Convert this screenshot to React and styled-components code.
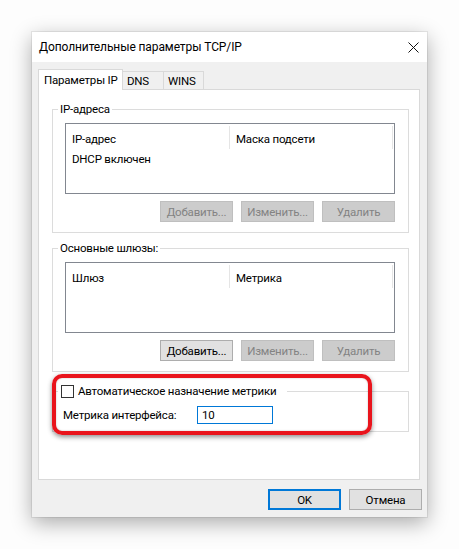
import React from 'react';
import styled, { createGlobalStyle } from 'styled-components';

const Global = createGlobalStyle`
  html, body { margin: 0; padding: 0; background: #fdfdfd; }
  body {
    font-family: Roboto, "Liberation Sans", Arial, sans-serif;
    font-size: 11.5px;
    letter-spacing: -0.2px;
    color: #000;
  }
  * { box-sizing: border-box; }
`;

const Page = styled.div`
  width: 459px;
  height: 549px;
  padding: 32px 0 0 32px;
`;

const Window = styled.div`
  width: 395px;
  height: 485px;
  background: #f0f0f0;
  display: flex;
  flex-direction: column;
  box-shadow: 0 0 0 1px rgba(0, 0, 0, 0.07), 0 6px 20px rgba(0, 0, 0, 0.33);
`;

const TitleBar = styled.div`
  height: 30px;
  flex-shrink: 0;
  background: #fff;
  display: flex;
  align-items: center;
  justify-content: space-between;
  padding: 0 8px 0 7px;
`;

const Title = styled.span`
  font-size: 12px;
  letter-spacing: -0.1px;
  line-height: 14px;
`;

const CloseBox = styled.div`
  width: 11px;
  height: 11px;
  display: flex;
`;

const Body = styled.div`
  flex: 1;
  display: flex;
  flex-direction: column;
  padding: 7px 5px 7px 6px;
`;

const TabStrip = styled.div`
  display: flex;
  align-items: flex-end;
  height: 20px;
  position: relative;
  z-index: 1;
`;

const Tab = styled.div`
  width: ${(p) => p.$w}px;
  height: ${(p) => (p.$active ? 21 : 18)}px;
  margin-bottom: ${(p) => (p.$active ? -1 : 0)}px;
  padding: ${(p) => (p.$active ? '0 0 1px 5px' : '0 0 0 4px')};
  display: flex;
  align-items: center;
  background: ${(p) => (p.$active ? '#fff' : '#f0f0f0')};
  border: 1px solid #d9d9d9;
  border-bottom: none;
  border-left: ${(p) => (p.$active ? '1px solid #d9d9d9' : 'none')};
  line-height: 14px;
  white-space: nowrap;
  overflow: hidden;
`;

const Panel = styled.div`
  width: 382px;
  height: 391px;
  background: #fff;
  border: 1px solid #d9d9d9;
  position: relative;
  padding: 0 0 0 13px;
`;

const Group = styled.div`
  width: 357px;
  margin-top: ${(p) => p.$mt}px;
`;

const GroupHead = styled.div`
  display: flex;
  align-items: center;
  height: 14px;
`;

const HeadEdge = styled.div`
  align-self: flex-end;
  height: 7px;
  border-top: 1px solid #dcdcdc;
  border-left: ${(p) => (p.$left ? '1px solid #dcdcdc' : 'none')};
  border-right: ${(p) => (p.$left ? 'none' : '1px solid #dcdcdc')};
  width: ${(p) => (p.$left ? '6px' : 'auto')};
  flex: ${(p) => (p.$left ? 'none' : 1)};
`;

const HeadLabel = styled.div`
  display: flex;
  align-items: center;
  padding: 0 ${(p) => p.$pr}px 0 2px;
  line-height: 14px;
  white-space: nowrap;
`;

const GroupBody = styled.div`
  border: 1px solid #dcdcdc;
  border-top: none;
  padding: ${(p) => p.$pad};
`;

const ListView = styled.div`
  width: 330px;
  height: 71px;
  border: 1px solid #828790;
  background: #fff;
`;

const HeaderRow = styled.div`
  display: flex;
  height: 25px;
`;

const HeaderCell = styled.div`
  width: ${(p) => p.$w}px;
  border-right: 1px solid #e5e5e5;
  padding: 2px 0 0 6px;
  display: flex;
  align-items: center;
  margin-top: 2px;
  line-height: 14px;
`;

const Row = styled.div`
  height: 18px;
  display: flex;
  align-items: center;
  padding: 1px 0 0 6px;
  line-height: 14px;
`;

const ButtonRow = styled.div`
  display: flex;
  justify-content: flex-end;
  gap: 8px;
  margin-top: 7px;
`;

const Button = styled.div`
  width: 73px;
  height: 21px;
  display: flex;
  align-items: center;
  justify-content: center;
  line-height: 14px;
  white-space: nowrap;
  background: ${(p) => (p.$disabled ? '#cccccc' : '#e1e1e1')};
  color: ${(p) => (p.$disabled ? '#838383' : '#000')};
  border: ${(p) =>
    p.$default ? '2px solid #0078d7' : p.$disabled ? '1px solid #bfbfbf' : '1px solid #adadad'};
`;

const CheckBox = styled.div`
  width: 13px;
  height: 13px;
  border: 1px solid #333;
  background: #fff;
  margin: 0 4px 0 1px;
`;

const FieldRow = styled.div`
  display: flex;
  align-items: center;
`;

const FieldLabel = styled.div`
  width: 134px;
  line-height: 14px;
`;

const Input = styled.div`
  width: 76px;
  height: 18px;
  border: 1px solid #0078d7;
  padding: 0 0 0 4px;
  display: flex;
  align-items: center;
  line-height: 14px;
`;

const Highlight = styled.div`
  position: absolute;
  left: 13px;
  top: 284px;
  width: 320px;
  height: 61px;
  border: 4px solid #e9141c;
  border-radius: 10px;
  box-shadow: 0 2px 5px rgba(0, 0, 0, 0.45), inset 0 0 2px rgba(0, 0, 0, 0.25);
  pointer-events: none;
`;

const Footer = styled.div`
  display: flex;
  justify-content: flex-end;
  gap: 8px;
  margin-top: 9px;
`;

const CloseIcon = () => (
  <svg width="11" height="11" viewBox="0 0 11 11">
    <path d="M0.5 0.5 L10.5 10.5 M10.5 0.5 L0.5 10.5" stroke="#111" strokeWidth="1" fill="none" />
  </svg>
);

const ListGroup = ({ mt, title, cols, rows, addEnabled }) => (
  <Group $mt={mt}>
    <GroupHead>
      <HeadEdge $left />
      <HeadLabel $pr={2}>{title}</HeadLabel>
      <HeadEdge />
    </GroupHead>
    <GroupBody $pad="7px 13px 10px 12px">
      <ListView>
        <HeaderRow>
          <HeaderCell $w={164}>{cols[0]}</HeaderCell>
          <HeaderCell $w={163}>{cols[1]}</HeaderCell>
        </HeaderRow>
        {rows.map((r) => (
          <Row key={r}>{r}</Row>
        ))}
      </ListView>
      <ButtonRow>
        <Button $disabled={!addEnabled}>Добавить...</Button>
        <Button $disabled>Изменить...</Button>
        <Button $disabled>Удалить</Button>
      </ButtonRow>
    </GroupBody>
  </Group>
);

export default function App() {
  return (
    <Page>
      <Global />
      <Window>
        <TitleBar>
          <Title>Дополнительные параметры TCP/IP</Title>
          <CloseBox>
            <CloseIcon />
          </CloseBox>
        </TitleBar>
        <Body>
          <TabStrip>
            <Tab $active $w={85}>Параметры IP</Tab>
            <Tab $w={41}>DNS</Tab>
            <Tab $w={40}>WINS</Tab>
          </TabStrip>
          <Panel>
            <ListGroup
              mt={12}
              title="IP-адреса"
              cols={['IP-адрес', 'Маска подсети']}
              rows={['DHCP включен']}
            />
            <ListGroup
              mt={8}
              title="Основные шлюзы:"
              cols={['Шлюз', 'Метрика']}
              rows={[]}
              addEnabled
            />
            <Group $mt={12}>
              <GroupHead>
                <HeadEdge $left />
                <HeadLabel $pr={11}>
                  <CheckBox />
                  Автоматическое назначение метрики
                </HeadLabel>
                <HeadEdge />
              </GroupHead>
              <GroupBody $pad="8px 10px 7px 10px">
                <FieldRow>
                  <FieldLabel>Метрика интерфейса:</FieldLabel>
                  <Input>10</Input>
                </FieldRow>
              </GroupBody>
            </Group>
            <Highlight />
          </Panel>
          <Footer>
            <Button $default>OK</Button>
            <Button>Отмена</Button>
          </Footer>
        </Body>
      </Window>
    </Page>
  );
}
